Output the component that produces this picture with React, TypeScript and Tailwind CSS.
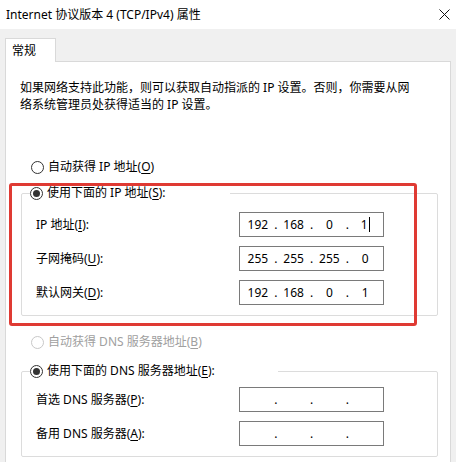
import React from 'react';

const Radio = ({ checked, disabled }: { checked?: boolean; disabled?: boolean }) => (
  <span
    className={`flex h-[13px] w-[13px] shrink-0 items-center justify-center rounded-full border bg-white ${
      disabled ? 'border-[#c8c8c8]' : 'border-[#333333]'
    }`}
  >
    {checked && <span className="h-[7px] w-[7px] rounded-full bg-[#333333]" />}
  </span>
);

const IpBox = ({ parts, cursor }: { parts: string[]; cursor?: boolean }) => (
  <div className="flex h-[25px] w-[145px] items-center border border-[#7a7a7a] bg-white">
    {parts.map((p, i) => (
      <React.Fragment key={i}>
        <span className="flex flex-1 items-center justify-center">
          {p}
          {cursor && i === 3 && <span className="ml-[1px] h-[15px] w-px bg-black" />}
        </span>
        {i < 3 && <span className="flex w-0 justify-center">.</span>}
      </React.Fragment>
    ))}
  </div>
);

const Row = ({ label, parts, cursor }: { label: React.ReactNode; parts: string[]; cursor?: boolean }) => (
  <div className="flex items-center">
    <span className="w-[203px]">{label}</span>
    <IpBox parts={parts} cursor={cursor} />
  </div>
);

const U = ({ children }: { children: React.ReactNode }) => (
  <span className="underline underline-offset-2">{children}</span>
);

export default function App() {
  return (
    <div className="relative h-[462px] w-[456px] overflow-hidden bg-[#f0f0f0] font-['Noto_Sans','Noto_Sans_CJK_SC',sans-serif] text-[12px] text-black">
      {/* title bar */}
      <div className="flex h-[29px] items-center justify-between bg-white pl-[6px] pr-[6px]">
        <span>Internet 协议版本 4 (TCP/IPv4) 属性</span>
        <svg width="11" height="11" viewBox="0 0 11 11">
          <path d="M0.5 0.5 L10.5 10.5 M10.5 0.5 L0.5 10.5" stroke="#111" strokeWidth="1" />
        </svg>
      </div>

      {/* tabs */}
      <div className="pl-[5px] pt-[9px]">
        <div className="relative z-10 -mb-px flex h-[24px] w-[51px] items-center border border-b-0 border-[#d9d9d9] bg-white pl-[6px]">
          常规
        </div>
      </div>

      {/* panel */}
      <div className="ml-[5px] mr-[5px] h-[420px] border border-[#d9d9d9] bg-white pt-[17px]">
        <p className="pl-[14px] leading-[17px]">
          如果网络支持此功能，则可以获取自动指派的 IP 设置。否则，你需要从网
          <br />
          络系统管理员处获得适当的 IP 设置。
        </p>

        <div className="ml-[25px] mt-[45px] flex h-[18px] items-center gap-[4px]">
          <Radio />
          <span>
            自动获得 IP 地址(<U>O</U>)
          </span>
        </div>

        <fieldset className="ml-[15px] mt-[8px] w-[417px] rounded-[2px] border border-[#dcdcdc] pb-[10px]">
          <legend className="ml-[8px] w-[200px]">
            <span className="flex h-[18px] items-center gap-[4px]">
              <Radio checked />
              <span>
                使用下面的 IP 地址(<U>S</U>):
              </span>
            </span>
          </legend>
          <div className="flex flex-col gap-[9px] pl-[14px] pt-[10px]">
            <Row label={<>IP 地址(<U>I</U>):</>} parts={['192', '168', '0', '1']} cursor />
            <Row label={<>子网掩码(<U>U</U>):</>} parts={['255', '255', '255', '0']} />
            <Row label={<>默认网关(<U>D</U>):</>} parts={['192', '168', '0', '1']} />
          </div>
        </fieldset>

        <div className="ml-[25px] mt-[17px] flex h-[18px] items-center gap-[4px] text-[#a0a0a0]">
          <Radio disabled />
          <span>
            自动获得 DNS 服务器地址(<U>B</U>)
          </span>
        </div>

        <fieldset className="ml-[15px] mt-[11px] w-[417px] rounded-[2px] border border-[#dcdcdc] pb-[10px]">
          <legend className="ml-[8px] w-[248px]">
            <span className="flex h-[18px] items-center gap-[4px]">
              <Radio checked />
              <span>
                使用下面的 DNS 服务器地址(<U>E</U>):
              </span>
            </span>
          </legend>
          <div className="flex flex-col gap-[9px] pl-[14px] pt-[7px]">
            <Row label={<>首选 DNS 服务器(<U>P</U>):</>} parts={['', '', '', '']} />
            <Row label={<>备用 DNS 服务器(<U>A</U>):</>} parts={['', '', '', '']} />
          </div>
        </fieldset>
      </div>

      {/* red annotation box */}
      <div className="pointer-events-none absolute left-[9px] top-[183px] h-[143px] w-[408px] rounded-[3px] border-[3px] border-[#df3a33]" />
    </div>
  );
}
